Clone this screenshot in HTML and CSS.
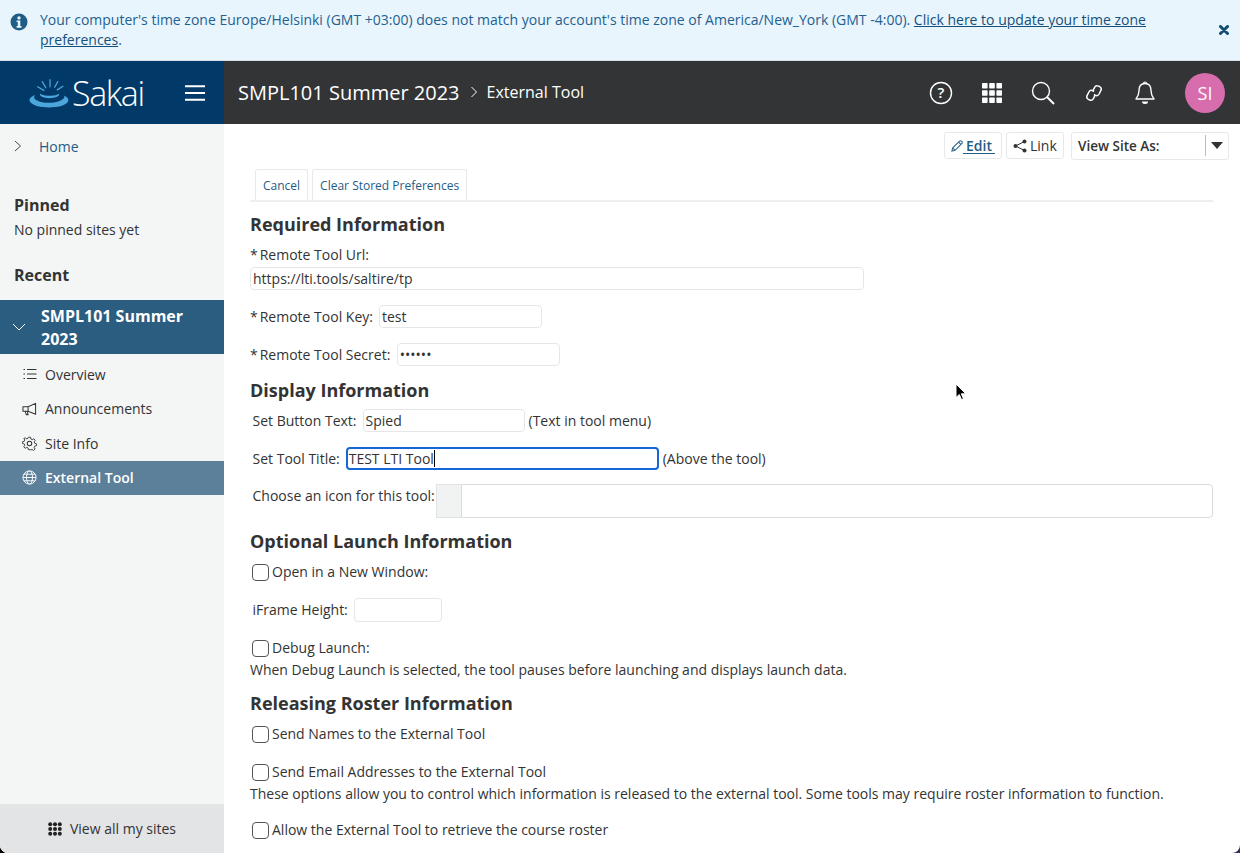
FILE: index.html
```html
<!DOCTYPE html>
<html lang="en">
<head>
<meta charset="utf-8">
<title>External Tool</title>
<link rel="stylesheet" href="styles.css">
</head>
<body>
<div class="page">
  <div class="alert">
    <svg class="alert-icon" viewBox="0 0 18 18" width="18" height="18"><circle cx="9" cy="9" r="8.5" fill="#1f5c86"/><circle cx="9" cy="4.9" r="1.7" fill="#e9f5fd"/><path d="M6.6 7.4h3.7v5.6h1.2v1.7H6.6V13h1.2V9.1H6.6z" fill="#e9f5fd"/></svg>
    <p class="alert-text">Your computer's time zone Europe/Helsinki (GMT +03:00) does not match your account's time zone of America/New_York (GMT -4:00). <a href="#">Click here to update your time zone preferences</a>.</p>
    <svg class="alert-close" viewBox="0 0 10 10" width="10" height="10"><path d="M1.5 1.5l7 7M8.5 1.5l-7 7" stroke="#124c74" stroke-width="3" stroke-linecap="round"/></svg>
  </div>
  <header class="topbar">
    <div class="brand">
      <svg class="logo" viewBox="0 0 40 30" width="42" height="31"><g stroke="#4ba6dc" stroke-width="1.2" stroke-linecap="round" fill="none"><path d="M21 1.5v7M13.5 3.5l3.5 6M28.5 3.5l-3 5.5M9 8.5l6 3.5M33.5 8l-5.5 3.5"/></g><path d="M6.5 16.5C1.500 18.500 0 21 2 23.500c3 3.500 10 5 18 5s15-1.500 18-5c1.700-2.200 .3-4.700-3.500-6.500 1.500 2-1 4.200-5 5.500-6 2-14 2-19.500 0C6 21 4.500 18.800 6.500 16.500z" fill="#4ba6dc"/><path d="M11.500 15c-1.500 2.500 3 4.500 9 4.500s10.500-2 9-4.500c-1 1.300-4.500 2.200-9 2.200s-8-1-9-2.200z" fill="#4ba6dc"/></svg>
      <span class="brand-name">Sakai</span>
      <svg class="burger" viewBox="0 0 20 16" width="20" height="16"><path d="M0 1.200h20M0 8h20M0 14.800h20" stroke="#fff" stroke-width="2"/></svg>
    </div>
    <div class="crumbs">
      <span class="crumb-site">SMPL101 Summer 2023</span>
      <svg class="crumb-sep" viewBox="0 0 8 12" width="8" height="12"><path d="M1.500 1l5 5-5 5" stroke="#fff" stroke-width="1" fill="none"/></svg>
      <span class="crumb-tool">External Tool</span>
    </div>
    <nav class="top-icons">
      <svg viewBox="0 0 24 24" width="24" height="24"><circle cx="12" cy="12" r="10.500" fill="none" stroke="#fff" stroke-width="1.400"/><text x="12" y="17" text-anchor="middle" class="help-q">?</text></svg>
      <svg viewBox="0 0 20 20" width="20" height="20"><g fill="#fff"><rect x="0" y="0" width="5.600" height="5.600" rx=".8"/><rect x="7.200" y="0" width="5.600" height="5.600" rx=".8"/><rect x="14.400" y="0" width="5.600" height="5.600" rx=".8"/><rect x="0" y="7.200" width="5.600" height="5.600" rx=".8"/><rect x="7.200" y="7.200" width="5.600" height="5.600" rx=".8"/><rect x="14.400" y="7.200" width="5.600" height="5.600" rx=".8"/><rect x="0" y="14.400" width="5.600" height="5.600" rx=".8"/><rect x="7.200" y="14.400" width="5.600" height="5.600" rx=".8"/><rect x="14.400" y="14.400" width="5.600" height="5.600" rx=".8"/></g></svg>
      <svg viewBox="0 0 24 24" width="24" height="24"><circle cx="10" cy="10" r="8.500" fill="none" stroke="#fff" stroke-width="1.400"/><path d="M16 16l7 7" stroke="#fff" stroke-width="2"/></svg>
      <svg viewBox="0 0 18 18" width="18" height="18"><g fill="none" stroke="#fff" stroke-width="1.500"><path d="M7.800 6.800l1.800-3.400a3 3 0 0 1 4-1.200l1 .5a3 3 0 0 1 1.200 4l-1.700 3.300a3 3 0 0 1-4 1.200l-1.200-.7"/><path d="M10.200 11.200l-1.800 3.400a3 3 0 0 1-4 1.200l-1-.5a3 3 0 0 1-1.200-4l1.700-3.300a3 3 0 0 1 4-1.200l1.200.7"/></g></svg>
      <svg viewBox="0 0 20 24" width="20" height="24"><path d="M10 2.500c-4 0-6 3-6 7 0 4-1 6-3 8.500h18c-2-2.500-3-4.500-3-8.500 0-4-2-7-6-7z" fill="none" stroke="#fff" stroke-width="1.400" stroke-linejoin="round"/><path d="M8.500 2.500a1.500 1.500 0 0 1 3 0" fill="none" stroke="#fff" stroke-width="1.200"/><path d="M7 20.500h6a3 2.500 0 0 1-6 0z" fill="#fff"/></svg>
      <span class="avatar">SI</span>
    </nav>
  </header>
  <div class="body">
    <aside class="side">
      <div class="side-scroll">
        <a class="home" href="#"><svg viewBox="0 0 8 12" width="8" height="12"><path d="M1 1l5.500 5L1 11" stroke="#444" stroke-width="1" fill="none"/></svg><span>Home</span></a>
        <h2 class="side-title side-pinned">Pinned</h2>
        <p class="side-note">No pinned sites yet</p>
        <h2 class="side-title side-recent">Recent</h2>
        <div class="site-head">
          <svg viewBox="0 0 14 8" width="14" height="8"><path d="M1 1l6 6 6-6" stroke="#fff" stroke-width="1" fill="none"/></svg>
          <span>SMPL101 Summer 2023</span>
        </div>
        <ul class="tools">
          <li class="tool"><svg viewBox="0 0 14 14" width="14" height="14"><g stroke="#333" stroke-width="1"><path d="M4.500 2.500H14M4.500 7H14M4.500 11.500H14"/><path d="M1 2.500h1.500M1 7h1.500M1 11.500h1.500"/></g></svg>Overview</li>
          <li class="tool"><svg viewBox="0 0 16 14" width="16" height="14"><path d="M1 4.500h5.500L14.500 1v11.500L6.500 9.500H1zM6.500 4.500v5M3.500 9.500l1 3.500h2l-.8-3.500" fill="none" stroke="#333" stroke-width="1.100" stroke-linejoin="round"/></svg>Announcements</li>
          <li class="tool"><svg viewBox="0 0 16 16" width="15" height="15"><circle cx="8" cy="8" r="2.400" fill="none" stroke="#333" stroke-width="1.100"/><path d="M6.800 1h2.400l.4 2 1.500.7 1.800-1 1.500 1.800-1.100 1.700.5 1.500 2 .6v2.200l-2 .5-.6 1.500 1.100 1.700-1.700 1.600-1.700-1.100-1.500.6L9.200 15H6.800l-.4-2-1.500-.6-1.800 1-1.500-1.700 1.100-1.700-.6-1.500-2-.5V6l2-.5.6-1.500-1.100-1.700L3.300 1.700 5 2.800l1.400-.7z" fill="none" stroke="#333" stroke-width="1" stroke-linejoin="round" transform="translate(.4 .4) scale(.95)"/></svg>Site Info</li>
          <li class="tool tool-active"><svg viewBox="0 0 16 16" width="15" height="15"><g fill="none" stroke="#fff" stroke-width="1"><circle cx="8" cy="8" r="7"/><ellipse cx="8" cy="8" rx="3.200" ry="7"/><path d="M1 8h14M2 4.500h12M2 11.500h12"/></g></svg>External Tool</li>
        </ul>
      </div>
      <a class="all-sites" href="#"><svg viewBox="0 0 14 14" width="14" height="14"><g fill="#222"><circle cx="2.200" cy="2.200" r="2"/><circle cx="7" cy="2.200" r="2"/><circle cx="11.800" cy="2.200" r="2"/><circle cx="2.200" cy="7" r="2"/><circle cx="7" cy="7" r="2"/><circle cx="11.800" cy="7" r="2"/><circle cx="2.200" cy="11.800" r="2"/><circle cx="7" cy="11.800" r="2"/><circle cx="11.800" cy="11.800" r="2"/></g></svg>View all my sites</a>
    </aside>
    <main class="main">
      <div class="toolbar">
        <a class="tbtn tbtn-edit" href="#"><svg viewBox="0 0 14 14" width="14" height="14"><path d="M1 13l1-3.800L10 1.200a1.400 1.400 0 0 1 2 0l.8.8a1.400 1.400 0 0 1 0 2L4.800 12zM2 9.200L4.800 12M8.800 2.500l2.700 2.700" fill="none" stroke="#2c6388" stroke-width="1.200"/></svg><span>Edit</span></a>
        <a class="tbtn tbtn-link" href="#"><svg viewBox="0 0 14 14" width="14" height="14"><g fill="#333"><circle cx="11.500" cy="2.500" r="2"/><circle cx="2.500" cy="7" r="2"/><circle cx="11.500" cy="11.500" r="2"/></g><path d="M11.500 2.500L2.500 7l9 4.500" fill="none" stroke="#333" stroke-width="1"/></svg>Link</a>
        <div class="view-as"><span class="view-label">View Site As:</span><span class="view-arrow"></span></div>
      </div>
      <div class="tabs"><a class="tab" href="#">Cancel</a><a class="tab" href="#">Clear Stored Preferences</a></div>
      <form class="form">
        <h3 class="sect sect-req">Required Information</h3>
        <div class="line line-url"><i class="req">*</i>Remote Tool Url:</div>
        <input class="field field-url" type="text" value="https://lti.tools/saltire/tp">
        <div class="line line-gap15"><i class="req">*</i>Remote Tool Key:<input class="field field-key" type="text" value="test"></div>
        <div class="line line-gap15"><i class="req">*</i>Remote Tool Secret:<input class="field field-secret" type="password" value="secret"></div>
        <h3 class="sect sect-disp">Display Information</h3>
        <div class="line line-first line-pad">Set Button Text:<input class="field field-btn" type="text" value="Spied"><span class="hint">(Text in tool menu)</span></div>
        <div class="line line-gap15 line-pad">Set Tool Title:<span class="field field-title">TEST LTI Tool<i class="caret"></i></span><span class="hint">(Above the tool)</span></div>
        <div class="line line-icon line-pad"><span class="icon-label">Choose an icon for this tool:</span><div class="icon-pick"><span class="icon-addon"></span><span class="icon-box"></span></div></div>
        <h3 class="sect sect-opt">Optional Launch Information</h3>
        <label class="line line-tall line-first"><input class="check" type="checkbox">Open in a New Window:</label>
        <div class="line line-tall line-gap14 line-pad">iFrame Height:<input class="field field-height" type="text"></div>
        <label class="line line-tall line-gap14"><input class="check" type="checkbox">Debug Launch:</label>
        <p class="note">When Debug Launch is selected, the tool pauses before launching and displays launch data.</p>
        <h3 class="sect sect-rel">Releasing Roster Information</h3>
        <label class="line line-tall line-first"><input class="check" type="checkbox">Send Names to the External Tool</label>
        <label class="line line-tall line-gap14"><input class="check" type="checkbox">Send Email Addresses to the External Tool</label>
        <p class="note">These options allow you to control which information is released to the external tool. Some tools may require roster information to function.</p>
        <label class="line line-tall line-gap13"><input class="check" type="checkbox">Allow the External Tool to retrieve the course roster</label>
      </form>
    </main>
  </div>
</div>
<svg class="pointer" viewBox="0 0 12 18" width="12" height="18"><path d="M1 1v13.500l3.300-3 2.200 5 2-.9-2.200-4.800h4.500z" fill="#000" stroke="#fff" stroke-width="1"/></svg>
</body>
</html>
```
FILE: styles.css
```css
* { box-sizing: border-box; }
html, body { margin: 0; height: 853px; overflow: hidden; }
body { font-family: "Open Sans", sans-serif; font-size: 14px; color: #333; position: relative; background: linear-gradient(to right, #000 50%, #3b2a5e 50%); }
a { color: #1f5c86; }
p, h2, h3, ul { margin: 0; padding: 0; }
.page { height: 853px; display: flex; flex-direction: column; background: #fff; border-radius: 0 0 8px 8px; overflow: hidden; }

.alert { height: 61px; flex: none; display: flex; background: #e9f5fd; color: #236090; padding: 10px 11px 0 10px; border-bottom: 1px solid #d5dfe5; }
.alert-icon { flex: none; margin-top: 3px; }
.alert-text { width: 1130px; margin-left: 12px; line-height: 20px; }
.alert-text a { color: #14507a; }
.alert-close { flex: none; margin: 15px 0 0 49px; }

.topbar { height: 63px; flex: none; display: flex; align-items: center; background: #333436; color: #fff; }
.brand { width: 224px; height: 100%; background: #013a69; display: flex; align-items: center; padding-left: 28px; }
.logo { flex: none; margin-top: 2px; }
.brand-name { font-weight: 300; font-size: 34px; margin-left: 2px; width: 113px; letter-spacing: -1.400px; color: #fff; flex: none; }
.burger { flex: none; }
.crumbs { display: flex; align-items: center; padding: 0 0 1px 14px; flex: 1; }
.crumb-site { font-size: 20px; }
.crumb-sep { margin: 0 9px 0 10px; }
.crumb-tool { font-size: 16px; }
.top-icons { display: flex; align-items: center; padding-right: 15px; }
.top-icons svg { display: block; }
.top-icons svg:nth-child(1) { margin-right: 29px; }
.top-icons svg:nth-child(2) { margin-right: 29px; }
.top-icons svg:nth-child(3) { margin-right: 30px; }
.top-icons svg:nth-child(4) { margin-right: 32px; }
.top-icons svg:nth-child(5) { margin-right: 30px; }
.help-q { fill: #fff; font-size: 15px; font-weight: 600; font-family: "Open Sans", sans-serif; }
.avatar { width: 40px; height: 40px; border-radius: 50%; background: #d76dad; display: flex; align-items: center; justify-content: center; font-size: 18px; color: #fff; }

.body { flex: 1; display: flex; min-height: 0; }
.side { width: 224px; flex: none; background: #f4f5f5; display: flex; flex-direction: column; }
.side-scroll { flex: 1; }
.home { display: flex; align-items: center; height: 22px; margin-top: 11px; padding-left: 14px; text-decoration: none; color: #1f5c86; }
.home span { margin-left: 17px; }
.side-title { font-size: 16px; font-weight: 700; color: #333; padding-left: 14px; line-height: 24px; }
.side-pinned { margin-top: 36px; }
.side-note { padding-left: 14px; line-height: 22px; margin-top: 2px; }
.side-recent { margin-top: 22px; }
.site-head { margin-top: 13px; height: 54px; background: #2b5d80; color: #fff; display: flex; align-items: center; padding-left: 12px; font-weight: 700; font-size: 16px; line-height: 23px; }
.site-head span { margin: 2px 0 0 15px; width: 170px; }
.tools { list-style: none; padding-top: 3px; }
.tool { height: 34.500px; display: flex; align-items: center; padding-left: 22px; gap: 8px; color: #333; }
.tool svg { width: 15px; flex: none; }
.tool-active { background: #5c7f9a; color: #fff; font-weight: 600; }
.all-sites { height: 49px; flex: none; background: #e3e4e6; display: flex; align-items: center; justify-content: center; gap: 8px; color: #333; text-decoration: none; }

.main { flex: 1; padding: 7px 27px 0 26px; min-width: 0; }
.toolbar { display: flex; justify-content: flex-end; align-items: center; gap: 4px; height: 29px; margin-right: -16px; }
.tbtn { height: 27px; border: 1px solid #e7e8e8; border-radius: 3px; display: flex; align-items: center; text-decoration: none; padding: 0 6px; gap: 3px; color: #333; }
.tbtn-edit { color: #1f5c86; font-weight: 600; width: 58px; gap: 0; }
.tbtn-edit span { border-bottom: 1px solid #1f5c86; line-height: 15px; padding: 0 3px; }
.tbtn-link { width: 58px; }
.view-as { width: 158px; height: 28px; margin-left: 3px; border: 1px solid #e7e8e8; border-radius: 3px; display: flex; align-items: center; padding-left: 6px; position: relative; font-weight: 600; }
.view-label { flex: 1; font-size: 13.500px; }
.view-arrow { width: 23px; height: 21px; border-left: 1px solid #bbb; position: relative; }
.view-arrow::after { content: ""; position: absolute; left: 5px; top: 7px; border: 6px solid transparent; border-top: 7px solid #333; border-bottom: 0; }

.tabs { display: flex; gap: 4px; margin-top: 9px; height: 33px; padding-left: 5px; border-bottom: 2px solid #eee; }
.tab { height: 31px; border: 1px solid #e9e9e9; border-bottom: 0; border-radius: 3px 3px 0 0; padding: 0 7px; font-size: 12px; line-height: 31px; text-decoration: none; color: #1f5c86; }

.sect { font-size: 18px; font-weight: 700; line-height: 24px; color: #333; }
.sect-req { margin-top: 10px; }
.sect-disp { margin-top: 12px; }
.sect-opt { margin-top: 11px; }
.sect-rel { margin-top: 10px; }
.line { display: flex; align-items: center; height: 23px; line-height: 20px; white-space: nowrap; }
.line-tall { height: 24px; }
.line-url { margin-top: 7px; height: 24px; }
.line-first { margin-top: 7px; }
.line-gap15 { margin-top: 15px; }
.line-gap14 { margin-top: 14px; }
.line-gap13 { margin-top: 13px; }
.line-icon { margin-top: 14px; height: 34px; align-items: flex-start; }
.line-pad { padding-left: 2.500px; }
.icon-label { line-height: 24px; }
.req { font-style: normal; margin-right: 2px; }
.field { height: 23px; border: 1px solid #e6e6e6; border-radius: 4px; background: #fff; font: inherit; color: #333; padding: 0 2px; outline: 0; display: block; }
.field-url { width: 614px; }
.field-key { width: 163px; margin-left: 6px; }
.field-secret { width: 163px; margin-left: 6.500px; }
.field-btn { width: 162px; margin-left: 6px; }
.field-title { width: 313px; margin-left: 6px; border: 2px solid #1566d6; border-radius: 4px; display: flex; align-items: center; padding: 0 1px; }
.caret { display: block; width: 1px; height: 17px; background: #000; }
.field-height { width: 88px; height: 24px; margin-left: 6px; }
.hint { margin-left: 4px; }
.icon-pick { display: flex; height: 34px; flex: 1; margin-left: 1px; }
.icon-addon { width: 25px; background: #f1f2f2; border: 1px solid #e0e2e5; border-right: 0; }
.icon-box { flex: 1; border: 1px solid #d9dbe0; border-radius: 0 4px 4px 0; }
.check { appearance: none; width: 17px; height: 17px; margin: 0 3px 0 2px; border: 1px solid #555; border-radius: 4px; background: #fff; flex: none; }
.note { line-height: 22px; margin-top: -1px; }
.pointer { position: absolute; left: 955px; top: 383px; }
```
